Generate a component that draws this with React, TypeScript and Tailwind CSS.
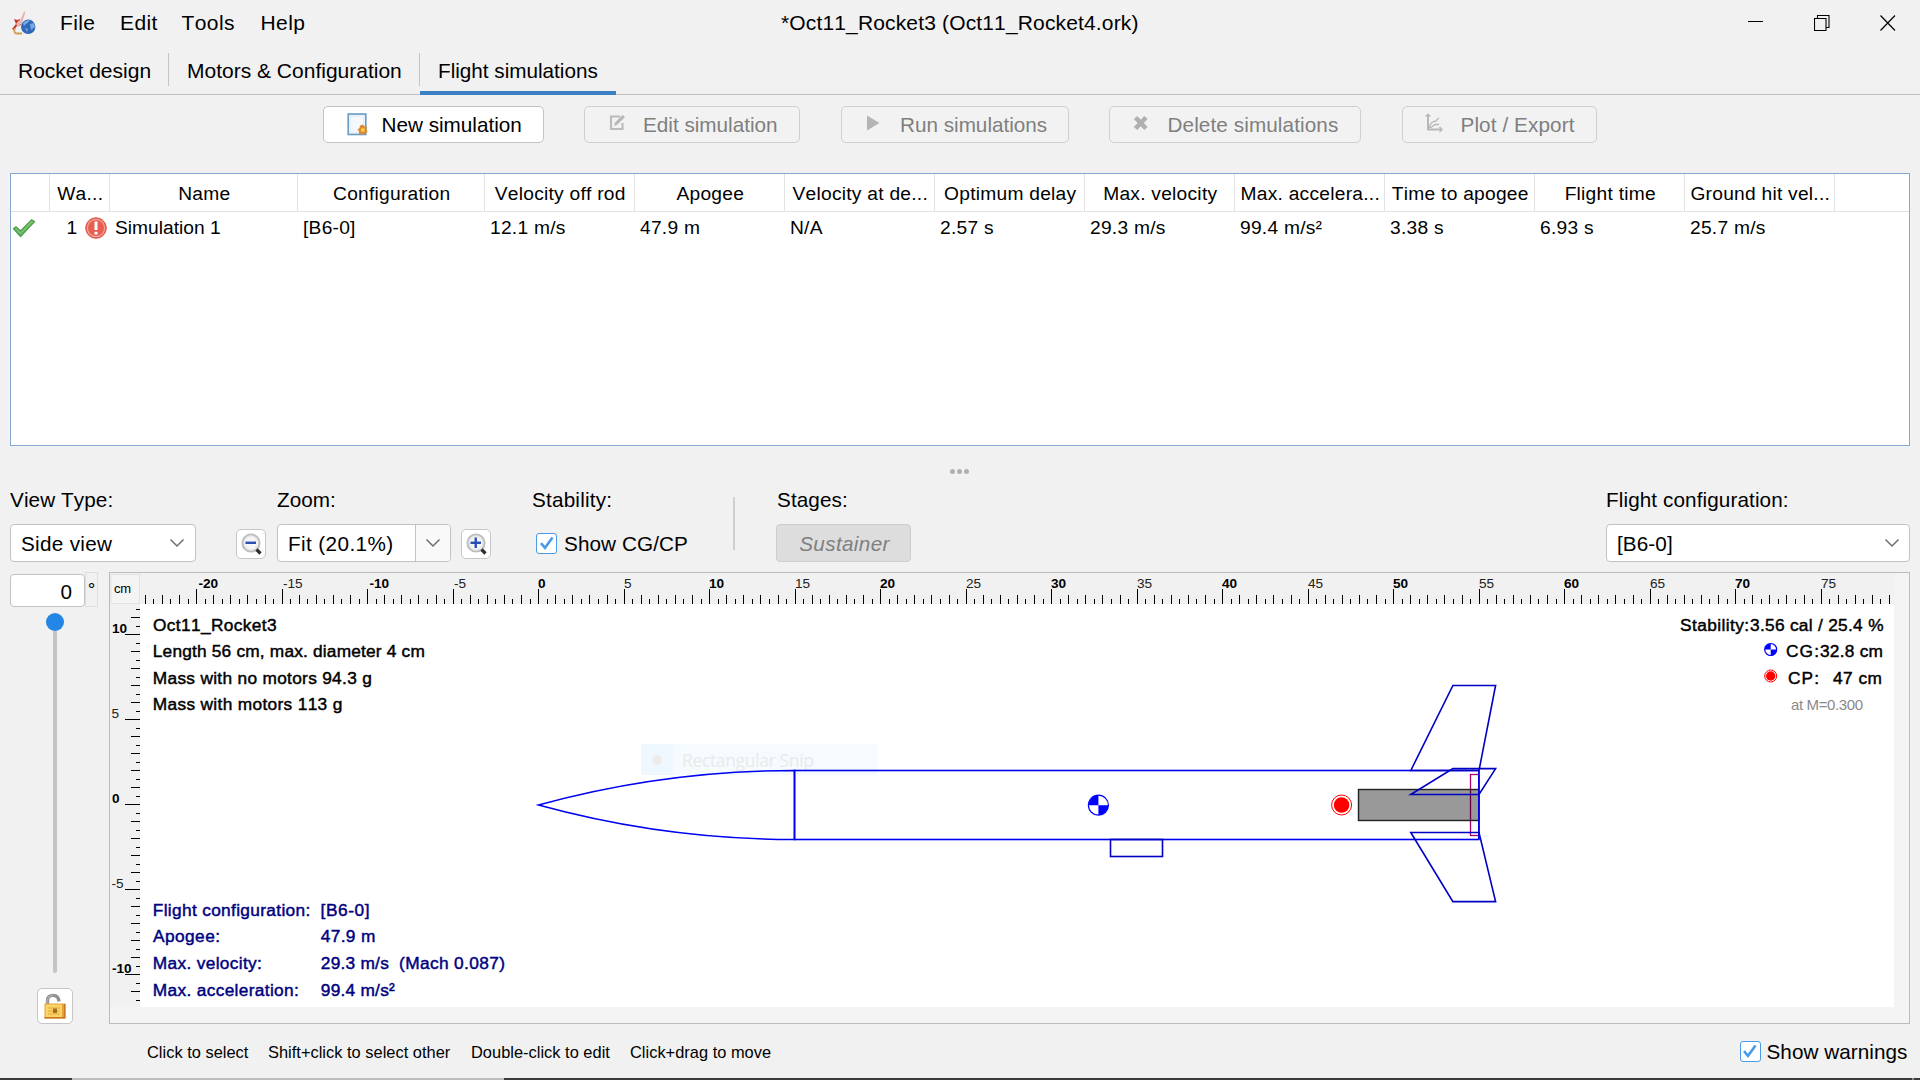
import React from "react";

const columns = [
  { w: "w-[39px]", head: "", cell: "" },
  { w: "w-[60px]", head: "Wa...", cell: "" },
  { w: "w-[188px]", head: "Name", cell: "Simulation 1" },
  { w: "w-[187px]", head: "Configuration", cell: "[B6-0]" },
  { w: "w-[150px]", head: "Velocity off rod", cell: "12.1 m/s" },
  { w: "w-[150px]", head: "Apogee", cell: "47.9 m" },
  { w: "w-[150px]", head: "Velocity at de...", cell: "N/A" },
  { w: "w-[150px]", head: "Optimum delay", cell: "2.57 s" },
  { w: "w-[150px]", head: "Max. velocity", cell: "29.3 m/s" },
  { w: "w-[150px]", head: "Max. accelera...", cell: "99.4 m/s²" },
  { w: "w-[150px]", head: "Time to apogee", cell: "3.38 s" },
  { w: "w-[150px]", head: "Flight time", cell: "6.93 s" },
  { w: "w-[150px]", head: "Ground hit vel...", cell: "25.7 m/s" },
];

function AppIcon() {
  return (
    <svg width="24" height="24" viewBox="0 0 24 24">
      <path d="M12 0.500 L13.500 1 L10 12 L7 16 L6 14 Z" fill="#e9b3b0" />
      <path d="M2 8 L5 9 L8 8 L7 12 L9 14 L5 15 L2 19 L0 18 L4 13 Z" fill="#c8302b" />
      <path d="M4 13 L7 9 L9 12 L6 16 Z" fill="#e4bcae" />
      <path d="M3 17 C1.500 20 2.500 22.500 5 22.500 L10 22.500" fill="none" stroke="#cf9d53" strokeWidth="1.800" />
      <circle cx="16.200" cy="15.800" r="7.200" fill="#2f67bb" />
      <path d="M11 12 Q14 8.500 18 9.200 L16 11.500 L14 13 L12 15 Z M18 13 L22 12 L23 16 L19 19 Z M13 17 L16 18 L15 21 Z" fill="#78aae0" />
    </svg>
  );
}

function NewIcon() {
  return (
    <svg width="21" height="23" viewBox="0 0 21 23">
      <rect x="1.200" y="1" width="17.600" height="20.500" fill="#e6f0f9" stroke="#6a9cc4" strokeWidth="1.600" />
      <rect x="4" y="4" width="12" height="15" fill="#fff" opacity="0.6" />
      <path d="M16 11.500 L17.500 13.500 L20 13.800 L19.500 16.500 L20.500 19 L18.500 20 L17 22 L14.500 21 L12 21 L12 18.500 L10.500 16.500 L12.500 15 L13 12.500 Z" fill="#dd8a35" />
      <circle cx="15.800" cy="17" r="2" fill="#f8cf3e" />
    </svg>
  );
}

function EditIcon() {
  return (
    <svg width="17" height="17" viewBox="0 0 17 17" fill="none" stroke="#bcbcbc" strokeWidth="2.200">
      <path d="M11 2.500 H2 V15 H13.500 V9" />
      <path d="M5 12 L6 8.500 L13.500 1 L16 3 L8.500 10.500 Z" fill="#b8b8b8" stroke="none" />
    </svg>
  );
}

function RunIcon() {
  return (
    <svg width="14" height="16" viewBox="0 0 14 16">
      <path d="M1 0.500 L13.500 8 L1 15.500 Z" fill="#b4b4b4" />
    </svg>
  );
}

function DeleteIcon() {
  return (
    <svg width="16" height="16" viewBox="0 0 16 16">
      <path d="M2.500 2.500 L13 13.500 M13 2.500 L2.500 13.500" stroke="#b0b0b0" strokeWidth="4.600" />
    </svg>
  );
}

function PlotIcon() {
  return (
    <svg width="18" height="20" viewBox="0 0 18 20" fill="none" stroke="#b8b8b8" strokeWidth="2">
      <path d="M3 1 V16.500 H17" />
      <path d="M0.500 3.500 L3 1.500 L5.500 3.500 M14.500 14 L17 16.500 L14.500 19" strokeWidth="1.400" />
      <path d="M4 15 C6 9 8 8 10 8.500 L14 5 M5 15 L10 11.500 L14 11.500" strokeWidth="1.300" />
    </svg>
  );
}

function Chevron() {
  return (
    <svg width="16" height="10" viewBox="0 0 16 10">
      <path d="M1.500 1.500 L8 8 L14.500 1.500" fill="none" stroke="#6e6e6e" strokeWidth="1.500" />
    </svg>
  );
}

function MagIcon({ plus = false }: { plus?: boolean }) {
  return (
    <svg className="mt-[2px] ml-[2px] shrink-0" width="22" height="24" viewBox="0 0 22 24">
      <circle cx="10" cy="10" r="8.600" fill="#e9e9e9" stroke="#bdbdbd" strokeWidth="1.900" />
      <circle cx="10" cy="10" r="6" fill="#f6f6f6" />
      <path d="M15.500 16.500 L19.500 20.500" stroke="#2c2c2c" strokeWidth="3.200" />
      <path d="M4.500 9.800 H15" stroke="#2a4fb4" strokeWidth="2.400" />
      {plus && <path d="M9.750 4.500 V15" stroke="#2a4fb4" strokeWidth="2.400" />}
    </svg>
  );
}

function CheckBox() {
  return (
    <span className="flex h-[21px] w-[21px] items-center justify-center rounded-[3px] border-[1.5px] border-[#4a9ae8] bg-white">
      <svg width="16" height="16" viewBox="0 0 16 16">
        <path d="M2 8.200 L6 12.800 L13.500 2.500" fill="none" stroke="#4a9ae8" strokeWidth="2.600" />
      </svg>
    </span>
  );
}

function LockIcon() {
  return (
    <svg width="22" height="26" viewBox="0 0 22 26">
      <path d="M3.500 11 V7.500 Q3.500 2.400 9 2.400 Q14.500 2.400 15 8.500" fill="none" stroke="#929292" strokeWidth="3.400" />
      <path d="M3 10 V7 Q4 2.500 9 2" fill="none" stroke="#b9b9b9" strokeWidth="1" />
      <rect x="0.500" y="10.500" width="21" height="15" fill="#e6a235" />
      <rect x="1.500" y="11.500" width="16.500" height="12.500" fill="#fbd468" />
      <path d="M0.500 24.700 H21.500 M20.700 11 V25" stroke="#c87820" strokeWidth="1.500" />
      <path d="M4 15 H16 M4 18 H16 M4 21 H16" stroke="#e0a93e" strokeWidth="1" />
      <rect x="9" y="15.500" width="4" height="4.500" fill="#a8711f" />
    </svg>
  );
}

function ToolButton({
  box,
  icon,
  label,
  iconBox,
  enabled = false,
}: {
  box: string;
  icon: React.ReactNode;
  label: string;
  iconBox: string;
  enabled?: boolean;
}) {
  return (
    <button
      className={`flex h-[37px] shrink-0 items-center rounded-[5px] border-[1.5px] text-[20.7px] whitespace-nowrap ${box} ${
        enabled ? "border-[#c2c2c2] bg-white text-black" : "border-[#cfcfcf] bg-[#f2f2f2] text-[#7f7f7f]"
      }`}
    >
      <span className={`shrink-0 ${iconBox}`}>{icon}</span>
      <span className="pt-[2px] pl-[0.500px]">{label}</span>
    </button>
  );
}

const X0 = 538.6;
const SX = 17.1;
const Y0 = 804.9;
const SY = 17;

function Rulers() {
  const hx = [];
  for (let i = -46; i <= 158; i++) {
    const x = Math.round(X0 + (i / 2) * SX - 0.5);
    const len = i % 10 === 0 ? 15 : i % 2 === 0 ? 9 : 5;
    hx.push(<rect key={`h${i}`} x={x} y={604 - len} width="1" height={len} fill="#000" />);
    if (i % 10 === 0) {
      const v = i / 2;
      const bold = v % 10 === 0;
      hx.push(
        <text key={`ht${i}`} x={x + (v < 0 ? (bold ? 2.5 : 1) : 0)} y="588" fontSize="13.600" fontWeight={bold ? 700 : 400} fill={bold ? "#000" : "#222"}>
          {v}
        </text>,
      );
    }
  }
  const vy = [];
  for (let i = -23; i <= 23; i++) {
    const y = Math.round(Y0 - (i / 2) * SY - 0.5);
    const len = i % 10 === 0 ? 15 : i % 2 === 0 ? 9 : 4;
    vy.push(<rect key={`v${i}`} x={140 - len} y={y} width={len} height="1" fill="#000" />);
    if (i % 10 === 0) {
      const v = i / 2;
      const bold = v % 10 === 0;
      vy.push(
        <text key={`vt${i}`} x={bold ? 112 : 111.5} y={y - 1} fontSize="13.600" fontWeight={bold ? 700 : 400} fill={bold ? "#000" : "#222"}>
          {v}
        </text>,
      );
    }
  }
  return (
    <g>
      {hx}
      {vy}
    </g>
  );
}

type Note = [number, number, number, string];
const designNotes: Note[] = [
  [153, 631, 123.5, "Oct11_Rocket3"],
  [152.8, 657, 272, "Length 56 cm, max. diameter 4 cm"],
  [152.8, 683.6, 219, "Mass with no motors 94.3 g"],
  [152.8, 709.8, 189.5, "Mass with motors 113 g"],
  [1680, 631, 69, "Stability:"],
  [1750, 631, 133.5, "3.56 cal / 25.4 %"],
  [1786, 657, 33, "CG:"],
  [1820, 657, 63, "32.8 cm"],
  [1788, 683.8, 31, "CP:"],
  [1833, 683.8, 49, "47 cm"],
];
const flightNotes: Note[] = [
  [152.8, 915.6, 157.5, "Flight configuration:"],
  [153, 941.6, 67, "Apogee:"],
  [152.8, 968.8, 109, "Max. velocity:"],
  [152.8, 995.6, 146, "Max. acceleration:"],
  [320.5, 915.6, 49, "[B6-0]"],
  [320.8, 941.6, 54.5, "47.9 m"],
  [320.8, 968.8, 68, "29.3 m/s"],
  [399, 968.8, 106, "(Mach 0.087)"],
  [320.8, 995.6, 74, "99.4 m/s²"],
];

function Notes({ items, color }: { items: Note[]; color: string }) {
  return (
    <g fontSize="17.300" fill={color} stroke={color} strokeWidth="0.450">
      {items.map(([x, y, w, t]) => (
        <text key={t} x={x} y={y} textLength={w}>
          {t}
        </text>
      ))}
    </g>
  );
}

function CgMark({ x, y, r }: { x: number; y: number; r: number }) {
  return (
    <g>
      <circle cx={x} cy={y} r={r} fill="#fff" stroke="#00f" strokeWidth="1.200" />
      <path d={`M${x} ${y} H${x - r} A${r} ${r} 0 0 1 ${x} ${y - r} Z M${x} ${y} H${x + r} A${r} ${r} 0 0 1 ${x} ${y + r} Z`} fill="#00f" />
    </g>
  );
}

function CpMark({ x, y, r }: { x: number; y: number; r: number }) {
  return (
    <g>
      <circle cx={x} cy={y} r={r} fill="#fff" stroke="#f00" strokeWidth="1" />
      <circle cx={x} cy={y} r={r * 0.78} fill="#f00" />
    </g>
  );
}

function RocketView() {
  return (
    <svg className="block" width="1799" height="450" viewBox="110 573 1799 450">
      <rect x="110" y="573" width="1799" height="450" fill="#f4f4f4" />
      <rect x="110" y="573" width="1784" height="31" fill="#f1f1f1" />
      <rect x="110" y="604" width="30" height="403" fill="#f1f1f1" />
      <rect x="140" y="604" width="1754" height="403" fill="#fff" />
      <rect x="111" y="574.500" width="28.500" height="29" fill="#f4f4f4" stroke="#e2e2e2" />
      <text x="114" y="593" fontSize="13" textLength="17">cm</text>
      <Rulers />

      <rect x="641" y="744" width="32" height="31" fill="#eff7ff" />
      <rect x="673" y="744" width="204" height="31" fill="#f5fbfe" />
      <circle cx="657" cy="760" r="5" fill="#ececec" />
      <text x="682" y="767" fontSize="17.500" textLength="132" fill="#e9eaea" fontFamily="'Open Sans', sans-serif">
        Rectangular Snip
      </text>

      <g fill="none" stroke="#0000f0" strokeWidth="1.600">
        <path d="M538.500 805 A967 967 0 0 1 794.500 770.500 V839.500 A967 967 0 0 1 538.500 805 Z" />
        <rect x="794.500" y="770.500" width="684.300" height="69" />
      </g>
      <rect x="1470.500" y="774.500" width="8.300" height="61" fill="none" stroke="#a8006c" strokeWidth="1.300" />
      <rect x="1358.500" y="789.500" width="120.300" height="31" fill="#000" fillOpacity="0.4" stroke="#222" strokeWidth="1.400" />
      <path d="M1478.800 770.500 V839.500" stroke="#0000e0" strokeWidth="1.600" />
      <g fill="none" stroke="#0000c4" strokeWidth="1.600">
        <rect x="1110.500" y="839.500" width="52" height="17" />
        <path d="M1410.800 770.500 L1452.900 685.500 H1495.600 L1479 770.500 Z" />
        <path d="M1410.800 794.500 L1452.900 768.600 H1495.600 L1479 794.500 Z" />
        <path d="M1410.800 832.500 L1452.900 901.600 H1495.600 L1479 832.500 Z" />
      </g>
      <CgMark x={1098.4} y={805.2} r={10} />
      <CpMark x={1341.6} y={805} r={10} />

      <Notes items={designNotes} color="#000" />
      <Notes items={flightNotes} color="#00007f" />
      <CgMark x={1770.7} y={649.5} r={6} />
      <CpMark x={1770.7} y={676} r={6} />
      <text x="1791" y="710" fontSize="15" textLength="72" fill="#8a8a8a">at M=0.300</text>
    </svg>
  );
}

export default function App() {
  return (
    <div className="flex h-[1080px] w-[1920px] flex-col overflow-hidden bg-[#f1f1f1] font-['Liberation_Sans',Arial,sans-serif] text-[20.7px] leading-none text-black [font-kerning:none]">
      {/* Title bar */}
      <header className="flex h-[46px] shrink-0 items-center text-[21px] whitespace-nowrap">
        <span className="ml-[12px] w-[48px]"><AppIcon /></span>
        <nav className="flex w-[721px] pb-[2px] tracking-[0.4px]">
          <span className="w-[60px]">File</span>
          <span className="w-[61.500px]">Edit</span>
          <span className="w-[79px]">Tools</span>
          <span>Help</span>
        </nav>
        <span className="w-[967px] pb-[2px] tracking-[0.15px]">*Oct11_Rocket3 (Oct11_Rocket4.ork)</span>
        <span className="w-[66px]">
          <svg width="16" height="16" viewBox="0 0 16 16"><path d="M0 6.500 H15" stroke="#000" /></svg>
        </span>
        <span className="w-[66px]">
          <svg width="16" height="18" viewBox="0 0 16 18" fill="none" stroke="#000" strokeWidth="1.100">
            <path d="M0.500 4.500 H12 V16.500 H0.500 Z M3.500 4.500 V1.500 H15 V13.500 H12" />
          </svg>
        </span>
        <svg width="16" height="18" viewBox="0 0 16 18"><path d="M0.500 1.500 L15 16.500 M15 1.500 L0.500 16.500" stroke="#000" strokeWidth="1.200" /></svg>
      </header>

      {/* Tabs */}
      <div className="flex h-[49px] shrink-0 border-b border-[#bfbfbf] text-[21px] whitespace-nowrap">
        <div className="flex w-[168px] items-center pt-px pl-[18px]">Rocket design</div>
        <div className="mt-[7px] h-[33px] w-[1px] bg-[#c4c4c4]" />
        <div className="flex w-[250px] items-center pt-px pl-[18px]">Motors &amp; Configuration</div>
        <div className="mt-[7px] h-[33px] w-[1px] bg-[#c4c4c4]" />
        <div className="flex h-[49px] w-[196px] items-center border-b-4 border-[#3c80c6] pt-[5px] pl-[18px] text-[20.7px]">Flight simulations</div>
      </div>

      {/* Simulation actions */}
      <div className="flex h-[78px] shrink-0 pt-[11px] pl-[323px]">
        <ToolButton box="w-[221px] mr-[40px]" iconBox="ml-[23px] w-[34px]" icon={<NewIcon />} label="New simulation" enabled />
        <ToolButton box="w-[216px] mr-[41px]" iconBox="ml-[24px] w-[33.500px] mb-[5px]" icon={<EditIcon />} label="Edit simulation" />
        <ToolButton box="w-[228px] mr-[40px]" iconBox="ml-[24px] w-[33.500px] mb-[4px]" icon={<RunIcon />} label="Run simulations" />
        <ToolButton box="w-[252px] mr-[41px] tracking-[0.1px]" iconBox="ml-[23px] w-[34px] mb-[4px]" icon={<DeleteIcon />} label="Delete simulations" />
        <ToolButton box="w-[195px] tracking-[0.1px]" iconBox="ml-[22px] w-[35px] mb-[4px]" icon={<PlotIcon />} label="Plot / Export" />
      </div>

      {/* Simulation table */}
      <div className="ml-[10px] h-[273px] w-[1900px] shrink-0 border border-[#86a9d2] bg-white text-[19.2px] whitespace-nowrap">
        <div className="flex h-[38px] border-b border-[#e2e2e2]">
          {columns.map((c, i) => (
            <div key={i} className={`flex shrink-0 items-center justify-center border-r border-[#e2e2e2] pt-[3px] pl-[1.500px] tracking-[0.25px] ${c.w}`}>
              {c.head}
            </div>
          ))}
        </div>
        <div className="flex h-[32px] items-center">
          <div className="w-[39px] pl-[1px]">
            <svg width="24" height="20" viewBox="0 0 24 20">
              <path d="M0.500 10.500 L4 8 L8.500 12 L19.500 1 L23.500 3.500 L8.500 19.500 Z" fill="#4f9f4c" />
              <path d="M2.500 10.500 L4 9.700 L8.500 14 L19.500 2.800 L21.500 3.800 L8.500 17 Z" fill="#7cc06f" />
            </svg>
          </div>
          <div className="flex w-[60px] items-center pl-[16.500px]">
            <span className="w-[18.500px]">1</span>
            <svg width="22" height="22" viewBox="0 0 22 22">
              <circle cx="11" cy="11" r="10.300" fill="#e65f52" stroke="#e0584c" />
              <circle cx="11" cy="11" r="8.600" fill="none" stroke="#f3aaa0" strokeWidth="1.100" />
              <path d="M11 4.500 V13" stroke="#fff" strokeWidth="3" />
              <path d="M11 14.800 V17.500" stroke="#fff" strokeWidth="3" />
            </svg>
          </div>
          {columns.slice(2).map((c, i) => (
            <div key={i} className={`shrink-0 pb-[1px] pl-[5px] ${i > 0 ? "tracking-[0.25px]" : ""} ${c.w}`}>{c.cell}</div>
          ))}
        </div>
      </div>

      {/* Split handle */}
      <div className="flex h-[42px] shrink-0 items-center justify-center gap-[2px] pt-[8px] pr-[1px]">
        <i className="h-[5px] w-[5px] rounded-full bg-[#b0b0b0]" />
        <i className="h-[5px] w-[5px] rounded-full bg-[#b0b0b0]" />
        <i className="h-[5px] w-[5px] rounded-full bg-[#b0b0b0]" />
      </div>

      {/* View controls */}
      <div className="flex h-[84px] shrink-0 whitespace-nowrap">
        <div className="ml-[10px] w-[226px]">
          <div className="flex h-[24px] items-center tracking-[0.1px]">View Type:</div>
          <div className="mt-[12px] flex h-[38px] w-[186px] items-center justify-between rounded-[4px] border-[1.5px] border-[#c2c2c2] bg-white pr-[10px] pl-[10px]">
            <span className="pt-[2px] tracking-[0.3px]">Side view</span>
            <Chevron />
          </div>
        </div>
        <div className="flex w-[296px] items-start">
          <div className="mt-[41px] mr-[11px] flex h-[30px] w-[30px] items-center justify-center rounded-[5px] border-[1.5px] border-[#c6c6c6] bg-white"><MagIcon /></div>
          <div className="w-[174px]">
            <div className="flex h-[24px] items-center">Zoom:</div>
            <div className="mt-[12px] flex h-[38px] overflow-hidden rounded-[4px] border-[1.5px] border-[#c2c2c2] bg-white">
              <span className="flex w-[138px] items-center border-r border-[#c2c2c2] pt-[2px] pl-[10px] tracking-[0.4px]">Fit (20.1%)</span>
              <span className="flex flex-1 items-center justify-center bg-[#f9f9f9]"><Chevron /></span>
            </div>
          </div>
          <div className="mt-[41px] ml-[10px] flex h-[30px] w-[30px] items-center justify-center rounded-[5px] border-[1.5px] border-[#c6c6c6] bg-white"><MagIcon plus /></div>
        </div>
        <div className="w-[201px]">
          <div className="flex h-[24px] items-center tracking-[0.2px]">Stability:</div>
          <div className="mt-[12px] flex h-[38px] items-center gap-[7px] pl-[4px]">
            <CheckBox />
            <span className="pt-[2px] tracking-[0.1px]">Show CG/CP</span>
          </div>
        </div>
        <div className="mt-[9px] h-[53px] w-[1.500px] bg-[#cfcfcf]" />
        <div className="ml-[41.500px] w-[830px]">
          <div className="flex h-[24px] items-center pl-px tracking-[0.1px]">Stages:</div>
          <div className="mt-[12px] flex h-[38px] w-[135px] items-center justify-center rounded-[4px] border-[1.5px] border-[#cdcdcd] bg-[#dddddd] pt-[2px] pl-[2px] tracking-[0.35px] text-[#808080] italic">Sustainer</div>
        </div>
        <div className="w-[304px]">
          <div className="flex h-[24px] items-center tracking-[0.1px]">Flight configuration:</div>
          <div className="mt-[12px] flex h-[38px] items-center justify-between rounded-[4px] border-[1.5px] border-[#c2c2c2] bg-white pr-[9px] pl-[10px]">
            <span className="pt-[2px] tracking-[0.1px]">[B6-0]</span>
            <Chevron />
          </div>
        </div>
      </div>

      {/* Rotation slider and rocket drawing */}
      <div className="flex h-[452px] shrink-0">
        <div className="w-[109px]">
          <div className="flex">
            <div className="mt-[2px] ml-[10px] flex h-[33px] w-[75px] items-center justify-end rounded-[4px] border-[1.5px] border-[#c2c2c2] bg-white pt-[3px] pr-[12px]">0</div>
            <div className="flex h-[35px] w-[13px] justify-center border border-[#dedede] pt-[7px] text-[19px]">°</div>
          </div>
          <div className="ml-[46px] flex h-[366px] w-[18px] flex-col items-center pt-[6px]">
            <div className="h-[18px] w-[18px] shrink-0 rounded-full bg-[#2186e6]" />
            <div className="w-[4px] flex-1 rounded-b-full bg-[#c4c4c4]" />
          </div>
          <div className="mt-[15px] ml-[37px] flex h-[36px] w-[36px] items-center justify-center rounded-[5px] border-[1.5px] border-[#c6c6c6] bg-white"><LockIcon /></div>
        </div>
        <div className="h-[452px] w-[1801px] border border-[#bcbcbc]">
          <RocketView />
        </div>
      </div>

      {/* Hints */}
      <footer className="flex h-[54px] shrink-0 items-center whitespace-nowrap">
        <div className="ml-[147px] flex w-[1592.500px] pt-[2px] text-[16.4px] tracking-[0.02px]">
          <span className="w-[121px]">Click to select</span>
          <span className="w-[203px]">Shift+click to select other</span>
          <span className="w-[159px]">Double-click to edit</span>
          <span>Click+drag to move</span>
        </div>
        <CheckBox />
        <span className="ml-[6px] pt-[2px] tracking-[0.05px]">Show warnings</span>
      </footer>
      <div className="flex h-[2px] shrink-0">
        <div className="w-[72px] bg-[#3b3b3b]" />
        <div className="w-[432px] bg-[#bdbdbd]" />
        <div className="w-[1408px] bg-[#3b3b3b]" />
        <div className="w-[2px] bg-[#8a8a8a]" />
        <div className="flex-1 bg-[#3b3b3b]" />
      </div>
    </div>
  );
}
